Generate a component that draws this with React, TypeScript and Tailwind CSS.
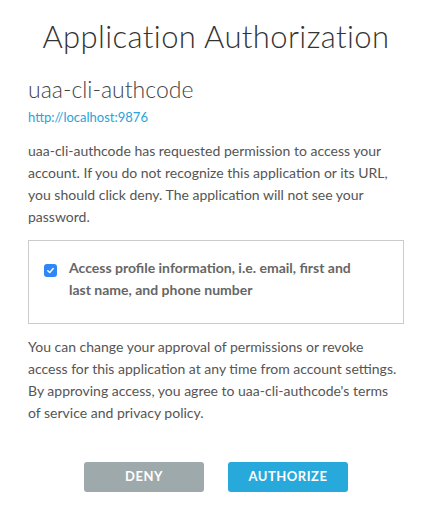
import React from "react";

const App: React.FC = () => {
    return (
        <div className="min-h-screen bg-white text-[#555] font-['Lato','Liberation_Sans',sans-serif]">
            <div className="w-[376px] ml-[28px] pt-[16px]">
                {/* Header */}
                <h1 className="text-center text-[31px] leading-[40px] font-light text-[#333] tracking-[0.4px]">
                    Application Authorization
                </h1>
                <h2 className="mt-[20px] text-[23px] leading-[26px] font-light text-[#444]">
                    uaa-cli-authcode
                </h2>
                <a href="#" className="block mt-[6px] text-[13px] leading-[18px] text-[#2aa3d8]">
                    http://localhost:9876
                </a>
                <p className="mt-[14px] text-[14px] leading-[22px]">
                    uaa-cli-authcode has requested permission to access your account. If you do not recognize this application or its URL, you should click deny. The application will not see your password.
                </p>

                {/* Scopes */}
                <div className="mt-[12px] border border-[#ccc] pl-[15px] pr-[40px] pt-[16px] pb-[22px] flex items-start gap-[12px]">
                    <span className="mt-[7px] w-[13px] h-[13px] rounded-[3px] bg-[#2f86f6] flex items-center justify-center shrink-0">
                        <svg width="9" height="9" viewBox="0 0 10 10">
                            <path d="M2 5.2 L4.2 7.3 L8 2.8" fill="none" stroke="white" strokeWidth="1.6" strokeLinecap="round" strokeLinejoin="round" />
                        </svg>
                    </span>
                    <label className="text-[14px] leading-[22px] font-bold text-[#666]">
                        Access profile information, i.e. email, first and last name, and phone number
                    </label>
                </div>

                <p className="mt-[12px] text-[14px] leading-[22px]">
                    You can change your approval of permissions or revoke access for this application at any time from account settings. By approving access, you agree to uaa-cli-authcode's terms of service and privacy policy.
                </p>

                {/* Actions */}
                <div className="mt-[38px] flex justify-center gap-[24px]">
                    <button className="w-[120px] h-[30px] rounded-[3px] bg-[#9ea9ab] text-white text-[13px] font-bold tracking-[0.5px]">
                        DENY
                    </button>
                    <button className="w-[120px] h-[30px] rounded-[3px] bg-[#27a9dc] text-white text-[13px] font-bold tracking-[0.5px]">
                        AUTHORIZE
                    </button>
                </div>
            </div>
        </div>
    );
};

export default App;
